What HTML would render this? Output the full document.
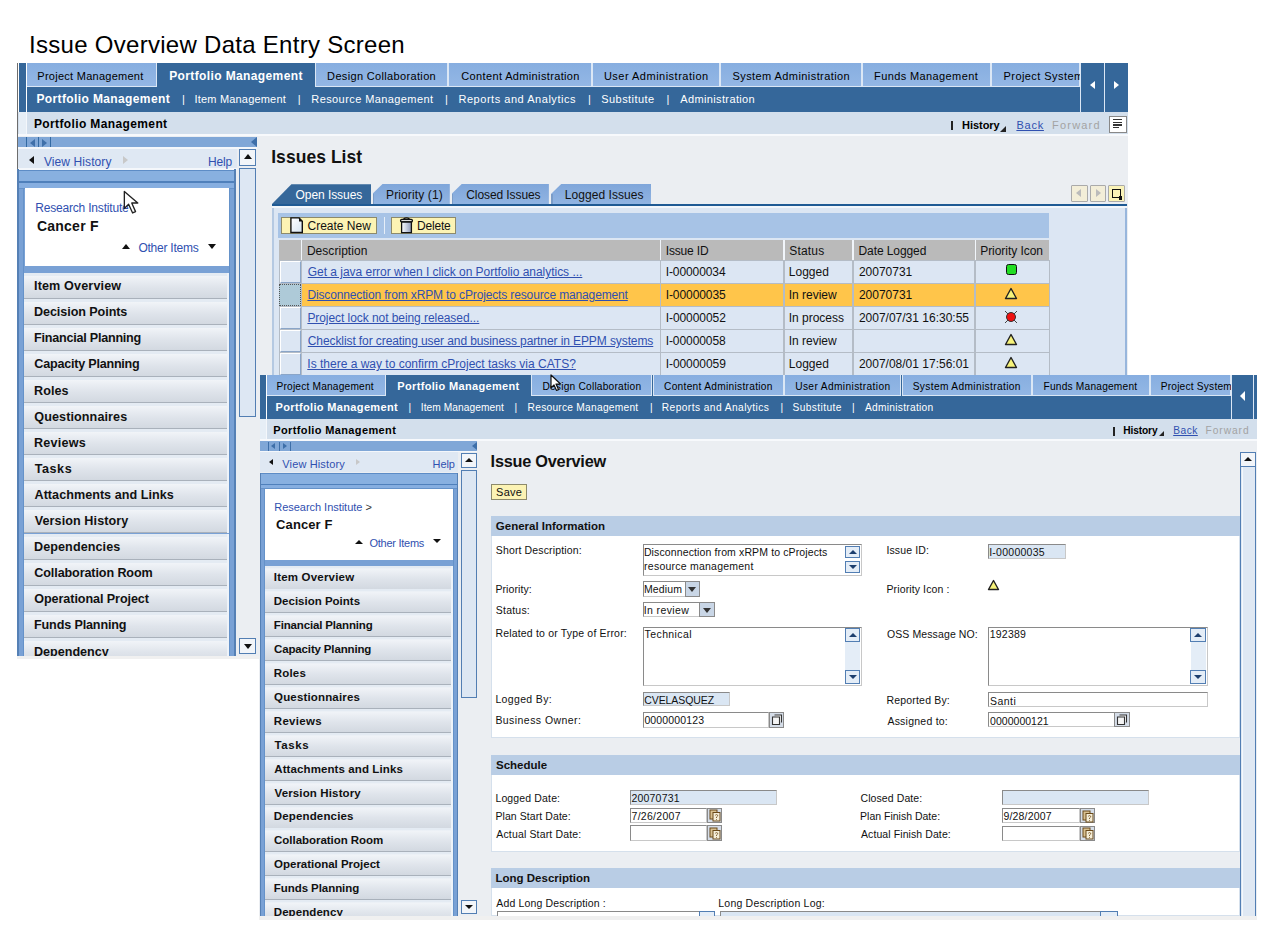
<!DOCTYPE html><html><head><meta charset="utf-8"><style>
html,body{margin:0;padding:0;background:#fff;width:1274px;height:932px;overflow:hidden;position:relative}
body div{position:absolute}
.t{white-space:nowrap;font-family:"Liberation Sans",sans-serif}
.u{text-decoration:underline}
</style></head><body>
<div class="t" style="left:29.10px;top:28.58px;font-size:24px;line-height:32px;color:#000;letter-spacing:0.281px;">Issue Overview Data Entry Screen</div>
<div style="left:17px;top:63px;width:1px;height:594px;background:#6d6d6d;"></div>
<div style="left:18px;top:63px;width:1110px;height:594px;background:#ebeef2;"></div>
<div style="left:18px;top:63px;width:9px;height:48.6px;background:#ffffff;"></div>
<div style="left:19px;top:63px;width:6.5px;height:48.6px;background:#35679a;"></div>
<div style="left:27px;top:63px;width:1053px;height:48.6px;background:#35679a;"></div>
<div style="left:27px;top:63px;width:130px;height:24px;background:#dbe7f5;"></div>
<div style="left:27px;top:63px;width:129px;height:23px;background:linear-gradient(#87aee0,#93b7e5);"></div>
<div style="left:315px;top:63px;width:133px;height:24px;background:#dbe7f5;"></div>
<div style="left:316px;top:63px;width:131px;height:23px;background:linear-gradient(#87aee0,#93b7e5);"></div>
<div style="left:448px;top:63px;width:144px;height:24px;background:#dbe7f5;"></div>
<div style="left:449px;top:63px;width:142px;height:23px;background:linear-gradient(#87aee0,#93b7e5);"></div>
<div style="left:592px;top:63px;width:128px;height:24px;background:#dbe7f5;"></div>
<div style="left:593px;top:63px;width:126px;height:23px;background:linear-gradient(#87aee0,#93b7e5);"></div>
<div style="left:720px;top:63px;width:142px;height:24px;background:#dbe7f5;"></div>
<div style="left:721px;top:63px;width:140px;height:23px;background:linear-gradient(#87aee0,#93b7e5);"></div>
<div style="left:862px;top:63px;width:129px;height:24px;background:#dbe7f5;"></div>
<div style="left:863px;top:63px;width:127px;height:23px;background:linear-gradient(#87aee0,#93b7e5);"></div>
<div style="left:991px;top:63px;width:89px;height:24px;background:#dbe7f5;"></div>
<div style="left:992px;top:63px;width:87px;height:23px;background:linear-gradient(#87aee0,#93b7e5);"></div>
<div style="left:27px;top:63px;width:1053px;height:24px;overflow:hidden">
<div class="t" style="left:10.30px;top:5.89px;font-size:11px;line-height:15px;color:#000;letter-spacing:0.265px;">Project Management</div>
<div class="t" style="left:142.20px;top:5.04px;font-size:12px;line-height:16px;color:#fff;font-weight:bold;letter-spacing:0.379px;">Portfolio Management</div>
<div class="t" style="left:300.10px;top:5.89px;font-size:11px;line-height:15px;color:#000;letter-spacing:0.342px;">Design Collaboration</div>
<div class="t" style="left:434.30px;top:5.89px;font-size:11px;line-height:15px;color:#000;letter-spacing:0.357px;">Content Administration</div>
<div class="t" style="left:576.90px;top:5.89px;font-size:11px;line-height:15px;color:#000;letter-spacing:0.494px;">User Administration</div>
<div class="t" style="left:705.50px;top:5.89px;font-size:11px;line-height:15px;color:#000;letter-spacing:0.420px;">System Administration</div>
<div class="t" style="left:847.10px;top:5.89px;font-size:11px;line-height:15px;color:#000;letter-spacing:0.387px;">Funds Management</div>
<div class="t" style="left:976.50px;top:5.89px;font-size:11px;line-height:15px;color:#000;letter-spacing:0.438px;">Project System</div>
</div>
<div style="left:1080px;top:63px;width:48px;height:48.6px;background:#35679a;"></div>
<div style="left:1080px;top:63px;width:1px;height:48.6px;background:#dbe7f5;"></div>
<div style="left:1104px;top:63px;width:1px;height:48.6px;background:#dbe7f5;"></div>
<div style="left:1089.8px;top:80.8px;width:0;height:0;border-right:5.4px solid #fff;border-top:4.7px solid transparent;border-bottom:4.7px solid transparent"></div>
<div style="left:1114.3px;top:80.8px;width:0;height:0;border-left:5.4px solid #fff;border-top:4.7px solid transparent;border-bottom:4.7px solid transparent"></div>
<div class="t" style="left:36.40px;top:91.14px;font-size:12px;line-height:16px;color:#fff;font-weight:bold;letter-spacing:0.384px;">Portfolio Management</div>
<div class="t" style="left:182.00px;top:91.99px;font-size:11px;line-height:15px;color:#fff;">|</div>
<div class="t" style="left:194.50px;top:91.99px;font-size:11px;line-height:15px;color:#fff;letter-spacing:0.186px;">Item Management</div>
<div class="t" style="left:297.80px;top:91.99px;font-size:11px;line-height:15px;color:#fff;">|</div>
<div class="t" style="left:311.30px;top:91.99px;font-size:11px;line-height:15px;color:#fff;letter-spacing:0.411px;">Resource Management</div>
<div class="t" style="left:445.00px;top:91.99px;font-size:11px;line-height:15px;color:#fff;">|</div>
<div class="t" style="left:458.50px;top:91.99px;font-size:11px;line-height:15px;color:#fff;letter-spacing:0.530px;">Reports and Analytics</div>
<div class="t" style="left:587.90px;top:91.99px;font-size:11px;line-height:15px;color:#fff;">|</div>
<div class="t" style="left:601.30px;top:91.99px;font-size:11px;line-height:15px;color:#fff;letter-spacing:0.433px;">Substitute</div>
<div class="t" style="left:666.40px;top:91.99px;font-size:11px;line-height:15px;color:#fff;">|</div>
<div class="t" style="left:680.30px;top:91.99px;font-size:11px;line-height:15px;color:#fff;letter-spacing:0.362px;">Administration</div>
<div style="left:18px;top:111.6px;width:1110px;height:22.2px;background:#d3dfec;"></div>
<div style="left:19px;top:111.6px;width:6.5px;height:22.2px;background:#e6eef6;"></div>
<div style="left:25.5px;top:111.6px;width:1.5px;height:22.2px;background:#f4f7fb;"></div>
<div class="t" style="left:33.90px;top:116.44px;font-size:12px;line-height:16px;color:#000;font-weight:bold;letter-spacing:0.379px;">Portfolio Management</div>
<div style="left:950.7px;top:120.7px;width:2.5px;height:9.7px;background:#222;"></div>
<div class="t" style="left:962.00px;top:117.59px;font-size:11px;line-height:15px;color:#000;font-weight:bold;letter-spacing:-0.033px;">History</div>
<div style="left:1000px;top:126px;width:0;height:0;border-left:6px solid transparent;border-bottom:6px solid #222"></div>
<div class="t u" style="left:1016.40px;top:117.59px;font-size:11px;line-height:15px;color:#3050b0;letter-spacing:0.767px;">Back</div>
<div class="t" style="left:1052.10px;top:117.59px;font-size:11px;line-height:15px;color:#a3a3a3;letter-spacing:1.183px;">Forward</div>
<div style="left:1109.3px;top:115.5px;width:17.4px;height:17.1px;background:#fff;border:1px solid #888;box-sizing:border-box;"></div>
<div style="left:1113px;top:119px;width:9px;height:1.4px;background:#333;"></div>
<div style="left:1113px;top:121.6px;width:9px;height:1.4px;background:#333;"></div>
<div style="left:1113px;top:124.2px;width:9px;height:1.4px;background:#333;"></div>
<div style="left:1113px;top:126.8px;width:6px;height:1.4px;background:#333;"></div>
<div style="left:18px;top:133.8px;width:1110px;height:2.5px;background:#f7f9fc;"></div>
<div style="left:18px;top:136.5px;width:239px;height:10.5px;background:#80a7d7;"></div>
<div style="left:25.6px;top:136.5px;width:1.6px;height:10.5px;background:#336aa3;"></div>
<div style="left:37.6px;top:136.5px;width:1.6px;height:10.5px;background:#336aa3;"></div>
<div style="left:49.6px;top:136.5px;width:1.6px;height:10.5px;background:#336aa3;"></div>
<div style="left:29.5px;top:138.5px;width:0;height:0;border-right:5px solid #3e6fa9;border-top:4px solid transparent;border-bottom:4px solid transparent"></div>
<div style="left:42px;top:138.5px;width:0;height:0;border-left:5px solid #3e6fa9;border-top:4px solid transparent;border-bottom:4px solid transparent"></div>
<div style="left:251px;top:137px;width:0;height:0;border-right:6px solid #3e6fa9;border-top:5px solid transparent;border-bottom:5px solid transparent"></div>
<div style="left:18px;top:146.6px;width:239px;height:2.4px;background:#f4f7fb;"></div>
<div style="left:18px;top:149px;width:219px;height:19px;background:#dfe8f3;"></div>
<div style="left:18px;top:168px;width:219px;height:1.7px;background:#f4f7fb;"></div>
<div style="left:28.5px;top:156px;width:0;height:0;border-right:5px solid #111;border-top:4px solid transparent;border-bottom:4px solid transparent"></div>
<div class="t" style="left:43.90px;top:153.74px;font-size:12px;line-height:16px;color:#3050b0;letter-spacing:0.100px;">View History</div>
<div style="left:123px;top:156px;width:0;height:0;border-left:5px solid #c8c8c8;border-top:4px solid transparent;border-bottom:4px solid transparent"></div>
<div class="t" style="left:208.00px;top:153.74px;font-size:12px;line-height:16px;color:#3050b0;letter-spacing:-0.167px;">Help</div>
<div style="left:18px;top:169.7px;width:217.7px;height:486.3px;background:#79a1d5;"></div>
<div style="left:18px;top:169.7px;width:217.7px;height:1.3px;background:#5d8cc6;"></div>
<div style="left:18px;top:171px;width:217.7px;height:10.3px;background:#88b0e0;"></div>
<div style="left:18px;top:181.3px;width:217.7px;height:1.7px;background:#4f80bb;"></div>
<div style="left:18px;top:183px;width:217.7px;height:4.5px;background:#86aee0;"></div>
<div style="left:18px;top:187.5px;width:217.7px;height:1px;background:#6592c9;"></div>
<div style="left:24.6px;top:188px;width:204.3px;height:77.6px;background:#fff;"></div>
<div class="t" style="left:35.20px;top:200.04px;font-size:12px;line-height:16px;color:#3050b0;letter-spacing:-0.188px;">Research Institute</div>
<div class="t" style="left:36.90px;top:217.25px;font-size:14px;line-height:19px;color:#111;font-weight:bold;letter-spacing:0.243px;">Cancer F</div>
<div style="left:122.2px;top:243.6px;width:0;height:0;border-bottom:5px solid #111;border-left:4.5px solid transparent;border-right:4.5px solid transparent"></div>
<div class="t" style="left:138.40px;top:239.54px;font-size:12px;line-height:16px;color:#3050b0;letter-spacing:-0.230px;">Other Items</div>
<div style="left:208px;top:243.6px;width:0;height:0;border-top:5px solid #111;border-left:4.5px solid transparent;border-right:4.5px solid transparent"></div>
<div style="left:17px;top:169px;width:1.5px;height:487px;background:#5580b5;"></div>
<div style="left:23px;top:188.5px;width:1px;height:467.5px;background:#6592c9;"></div>
<div style="left:229.3px;top:188.5px;width:1px;height:467.5px;background:#6592c9;"></div>
<div style="left:234.3px;top:169px;width:1.4px;height:487px;background:#5580b5;"></div>
<div style="left:24px;top:272.5px;width:205.3px;height:383.3px;overflow:hidden">
<div style="left:0;top:0.0px;width:205.3px;height:26.1px;background:linear-gradient(#e4ebf3 0,#e4ebf3 2.5px,#f1f4f8 3px,#dfe4eb 55%,#d3d9e1 24.7px,#a9b1bb 24.8px,#a9b1bb 26.1px);border-right:2px solid #eef3f9;box-sizing:border-box"></div>
<div class="t" style="left:10.00px;top:5.63px;font-size:12.6px;line-height:17px;color:#111;font-weight:bold;letter-spacing:0.142px;">Item Overview</div>
<div style="left:0;top:26.1px;width:205.3px;height:26.1px;background:linear-gradient(#e4ebf3 0,#e4ebf3 2.5px,#f1f4f8 3px,#dfe4eb 55%,#d3d9e1 24.7px,#a9b1bb 24.8px,#a9b1bb 26.1px);border-right:2px solid #eef3f9;box-sizing:border-box"></div>
<div class="t" style="left:10.00px;top:31.73px;font-size:12.6px;line-height:17px;color:#111;font-weight:bold;letter-spacing:-0.079px;">Decision Points</div>
<div style="left:0;top:52.2px;width:205.3px;height:26.1px;background:linear-gradient(#e4ebf3 0,#e4ebf3 2.5px,#f1f4f8 3px,#dfe4eb 55%,#d3d9e1 24.7px,#a9b1bb 24.8px,#a9b1bb 26.1px);border-right:2px solid #eef3f9;box-sizing:border-box"></div>
<div class="t" style="left:10.00px;top:57.83px;font-size:12.6px;line-height:17px;color:#111;font-weight:bold;letter-spacing:-0.235px;">Financial Planning</div>
<div style="left:0;top:78.3px;width:205.3px;height:26.1px;background:linear-gradient(#e4ebf3 0,#e4ebf3 2.5px,#f1f4f8 3px,#dfe4eb 55%,#d3d9e1 24.7px,#a9b1bb 24.8px,#a9b1bb 26.1px);border-right:2px solid #eef3f9;box-sizing:border-box"></div>
<div class="t" style="left:10.30px;top:83.93px;font-size:12.6px;line-height:17px;color:#111;font-weight:bold;letter-spacing:-0.231px;">Capacity Planning</div>
<div style="left:0;top:104.4px;width:205.3px;height:26.1px;background:linear-gradient(#e4ebf3 0,#e4ebf3 2.5px,#f1f4f8 3px,#dfe4eb 55%,#d3d9e1 24.7px,#a9b1bb 24.8px,#a9b1bb 26.1px);border-right:2px solid #eef3f9;box-sizing:border-box"></div>
<div class="t" style="left:10.00px;top:110.03px;font-size:12.6px;line-height:17px;color:#111;font-weight:bold;letter-spacing:0.075px;">Roles</div>
<div style="left:0;top:130.5px;width:205.3px;height:26.1px;background:linear-gradient(#e4ebf3 0,#e4ebf3 2.5px,#f1f4f8 3px,#dfe4eb 55%,#d3d9e1 24.7px,#a9b1bb 24.8px,#a9b1bb 26.1px);border-right:2px solid #eef3f9;box-sizing:border-box"></div>
<div class="t" style="left:10.30px;top:136.13px;font-size:12.6px;line-height:17px;color:#111;font-weight:bold;letter-spacing:0.092px;">Questionnaires</div>
<div style="left:0;top:156.6px;width:205.3px;height:26.1px;background:linear-gradient(#e4ebf3 0,#e4ebf3 2.5px,#f1f4f8 3px,#dfe4eb 55%,#d3d9e1 24.7px,#a9b1bb 24.8px,#a9b1bb 26.1px);border-right:2px solid #eef3f9;box-sizing:border-box"></div>
<div class="t" style="left:10.00px;top:162.23px;font-size:12.6px;line-height:17px;color:#111;font-weight:bold;letter-spacing:0.233px;">Reviews</div>
<div style="left:0;top:182.7px;width:205.3px;height:26.1px;background:linear-gradient(#e4ebf3 0,#e4ebf3 2.5px,#f1f4f8 3px,#dfe4eb 55%,#d3d9e1 24.7px,#a9b1bb 24.8px,#a9b1bb 26.1px);border-right:2px solid #eef3f9;box-sizing:border-box"></div>
<div class="t" style="left:10.70px;top:188.33px;font-size:12.6px;line-height:17px;color:#111;font-weight:bold;letter-spacing:0.550px;">Tasks</div>
<div style="left:0;top:208.8px;width:205.3px;height:26.1px;background:linear-gradient(#e4ebf3 0,#e4ebf3 2.5px,#f1f4f8 3px,#dfe4eb 55%,#d3d9e1 24.7px,#a9b1bb 24.8px,#a9b1bb 26.1px);border-right:2px solid #eef3f9;box-sizing:border-box"></div>
<div class="t" style="left:10.50px;top:214.43px;font-size:12.6px;line-height:17px;color:#111;font-weight:bold;letter-spacing:0.035px;">Attachments and Links</div>
<div style="left:0;top:234.9px;width:205.3px;height:26.1px;background:linear-gradient(#e4ebf3 0,#e4ebf3 2.5px,#f1f4f8 3px,#dfe4eb 55%,#d3d9e1 24.7px,#a9b1bb 24.8px,#a9b1bb 26.1px);border-right:2px solid #eef3f9;box-sizing:border-box"></div>
<div class="t" style="left:10.70px;top:240.53px;font-size:12.6px;line-height:17px;color:#111;font-weight:bold;letter-spacing:0.086px;">Version History</div>
<div style="left:0;top:261.0px;width:205.3px;height:26.1px;background:linear-gradient(#e4ebf3 0,#e4ebf3 2.5px,#f1f4f8 3px,#dfe4eb 55%,#d3d9e1 24.7px,#a9b1bb 24.8px,#a9b1bb 26.1px);border-right:2px solid #eef3f9;box-sizing:border-box"></div>
<div class="t" style="left:10.00px;top:266.63px;font-size:12.6px;line-height:17px;color:#111;font-weight:bold;letter-spacing:0.082px;">Dependencies</div>
<div style="left:0;top:287.1px;width:205.3px;height:26.1px;background:linear-gradient(#e4ebf3 0,#e4ebf3 2.5px,#f1f4f8 3px,#dfe4eb 55%,#d3d9e1 24.7px,#a9b1bb 24.8px,#a9b1bb 26.1px);border-right:2px solid #eef3f9;box-sizing:border-box"></div>
<div class="t" style="left:10.30px;top:292.73px;font-size:12.6px;line-height:17px;color:#111;font-weight:bold;letter-spacing:-0.112px;">Collaboration Room</div>
<div style="left:0;top:313.2px;width:205.3px;height:26.1px;background:linear-gradient(#e4ebf3 0,#e4ebf3 2.5px,#f1f4f8 3px,#dfe4eb 55%,#d3d9e1 24.7px,#a9b1bb 24.8px,#a9b1bb 26.1px);border-right:2px solid #eef3f9;box-sizing:border-box"></div>
<div class="t" style="left:10.30px;top:318.83px;font-size:12.6px;line-height:17px;color:#111;font-weight:bold;letter-spacing:-0.083px;">Operational Project</div>
<div style="left:0;top:339.3px;width:205.3px;height:26.1px;background:linear-gradient(#e4ebf3 0,#e4ebf3 2.5px,#f1f4f8 3px,#dfe4eb 55%,#d3d9e1 24.7px,#a9b1bb 24.8px,#a9b1bb 26.1px);border-right:2px solid #eef3f9;box-sizing:border-box"></div>
<div class="t" style="left:10.00px;top:344.93px;font-size:12.6px;line-height:17px;color:#111;font-weight:bold;letter-spacing:-0.146px;">Funds Planning</div>
<div style="left:0;top:365.4px;width:205.3px;height:26.1px;background:linear-gradient(#e4ebf3 0,#e4ebf3 2.5px,#f1f4f8 3px,#dfe4eb 55%,#d3d9e1 24.7px,#a9b1bb 24.8px,#a9b1bb 26.1px);border-right:2px solid #eef3f9;box-sizing:border-box"></div>
<div class="t" style="left:10.00px;top:371.03px;font-size:12.6px;line-height:17px;color:#111;font-weight:bold;letter-spacing:-0.011px;">Dependency</div>
</div>
<div style="left:237px;top:148.5px;width:25px;height:507.5px;background:#ebeef2;"></div>
<div style="left:239px;top:148.8px;width:17.4px;height:17.4px;background:#f2f5f9;border:1.3px solid #527eb3;box-sizing:border-box;"></div>
<div style="left:243.5px;top:154px;width:0;height:0;border-bottom:5px solid #111;border-left:4.5px solid transparent;border-right:4.5px solid transparent"></div>
<div style="left:239px;top:167.7px;width:17.4px;height:249.3px;background:#dde7f3;border:1.3px solid #527eb3;box-sizing:border-box;"></div>
<div style="left:239px;top:637.7px;width:17.4px;height:16.6px;background:#f2f5f9;border:1.3px solid #527eb3;box-sizing:border-box;"></div>
<div style="left:243.5px;top:643.5px;width:0;height:0;border-top:5px solid #111;border-left:4.5px solid transparent;border-right:4.5px solid transparent"></div>
<div style="left:17px;top:656px;width:245px;height:3px;background:#f0f0f0;"></div>
<div class="t" style="left:271.20px;top:146.24px;font-size:17.5px;line-height:23px;color:#111;font-weight:bold;letter-spacing:0.050px;">Issues List</div>
<div style="left:272px;top:184.2px;width:99.0px;height:19.8px;background:#35679a;clip-path:polygon(0 100%,19.4px 0,100% 0,100% 100%)"></div>
<div class="t" style="left:295.50px;top:187.24px;font-size:12px;line-height:16px;color:#fff;letter-spacing:-0.060px;">Open Issues</div>
<div style="left:372.5px;top:184px;width:77.3px;height:20px;background:linear-gradient(#7fa6da,#91b4e2);clip-path:polygon(0 100%,0 9.7px,10px 0,100% 0,100% 100%)"></div>
<div style="left:372.5px;top:193.7px;width:1.5px;height:10.3px;background:#7a9cc8;"></div>
<div class="t" style="left:386.00px;top:187.24px;font-size:12px;line-height:16px;color:#111;letter-spacing:0.127px;">Priority (1)</div>
<div style="left:451.7px;top:184px;width:97.2px;height:20px;background:linear-gradient(#7fa6da,#91b4e2);clip-path:polygon(0 100%,0 9.7px,10px 0,100% 0,100% 100%)"></div>
<div style="left:451.7px;top:193.7px;width:1.5px;height:10.3px;background:#7a9cc8;"></div>
<div class="t" style="left:466.30px;top:187.24px;font-size:12px;line-height:16px;color:#111;letter-spacing:-0.092px;">Closed Issues</div>
<div style="left:551.2px;top:184px;width:99.8px;height:20px;background:linear-gradient(#7fa6da,#91b4e2);clip-path:polygon(0 100%,0 9.7px,10px 0,100% 0,100% 100%)"></div>
<div style="left:551.2px;top:193.7px;width:1.5px;height:10.3px;background:#7a9cc8;"></div>
<div class="t" style="left:564.80px;top:187.24px;font-size:12px;line-height:16px;color:#111;letter-spacing:0.050px;">Logged Issues</div>
<div style="left:1071.3px;top:185.2px;width:16.6px;height:17.3px;background:#f3eed8;border:1px solid #aaa;box-sizing:border-box;border-radius:1px"></div>
<div style="left:1090px;top:185.2px;width:16.4px;height:17.3px;background:#f3eed8;border:1px solid #aaa;box-sizing:border-box;border-radius:1px"></div>
<div style="left:1108.4px;top:185.2px;width:17px;height:17.3px;background:#faf3b8;border:1px solid #aaa;box-sizing:border-box;border-radius:1px"></div>
<div style="left:1076px;top:189px;width:0;height:0;border-right:5px solid #bbb;border-top:4.5px solid transparent;border-bottom:4.5px solid transparent"></div>
<div style="left:1096px;top:189px;width:0;height:0;border-left:5px solid #bbb;border-top:4.5px solid transparent;border-bottom:4.5px solid transparent"></div>
<div style="left:1111.5px;top:188.5px;width:9.5px;height:9.5px;background:transparent;border:1.6px solid #111;box-sizing:border-box;"></div>
<div style="left:1119px;top:196px;width:3px;height:3.5px;background:#111;"></div>
<div style="left:272px;top:204px;width:854.5px;height:1.8px;background:#1f5a94;"></div>
<div style="left:272px;top:206px;width:855px;height:169px;background:#dce6f3;"></div>
<div style="left:272px;top:206px;width:1.5px;height:169px;background:#b5c9e2;"></div>
<div style="left:1125px;top:206px;width:2px;height:169px;background:#98b6dc;"></div>
<div style="left:272px;top:206px;width:855px;height:1.5px;background:#f2f6fb;"></div>
<div style="left:278px;top:213px;width:771px;height:24.6px;background:#a7c3e6;"></div>
<div style="left:281.4px;top:217px;width:95.4px;height:17px;background:#fcf3b4;border:1px solid #8d8a6b;box-sizing:border-box;"></div>
<div class="t" style="left:307.50px;top:218.14px;font-size:12px;line-height:16px;color:#111;">Create New</div>
<div style="left:391.3px;top:217px;width:65px;height:17px;background:#fcf3b4;border:1px solid #8d8a6b;box-sizing:border-box;"></div>
<div class="t" style="left:417.00px;top:218.14px;font-size:12px;line-height:16px;color:#111;letter-spacing:-0.200px;">Delete</div>
<div style="left:383.5px;top:217px;width:1.5px;height:17px;background:#e6eef8;"></div>
<svg style="position:absolute;left:289px;top:216px" width="16" height="19"><defs><linearGradient id="dg" x1="0" y1="0" x2="1" y2="1"><stop offset="0" stop-color="#ffffff"/><stop offset="1" stop-color="#d5e4f2"/></linearGradient></defs><path d="M1.9 1.9 H10 L13.3 5.2 V16.5 H1.9 Z" fill="url(#dg)" stroke="#111" stroke-width="1.4"/><path d="M10 1.4 L13.8 5.5 H10 Z" fill="#111"/></svg>
<svg style="position:absolute;left:399px;top:216px" width="15" height="19"><defs><linearGradient id="tg" x1="0" y1="0" x2="1" y2="0"><stop offset="0" stop-color="#ffffff"/><stop offset="0.5" stop-color="#c8cfe0"/><stop offset="1" stop-color="#8d98b8"/></linearGradient></defs><path d="M4.5 3 Q7.5 0.6 10.5 3" fill="none" stroke="#111" stroke-width="1.3"/><rect x="1.6" y="3.4" width="11.8" height="2.6" rx="1.2" fill="#ddd" stroke="#111" stroke-width="1.3"/><path d="M2.6 6 V16.6 H12.4 V6 Z" fill="url(#tg)" stroke="#111" stroke-width="1.3"/></svg>
<div style="left:279px;top:240px;width:770px;height:135px;background:#f1f5fa;"></div>
<div style="left:279px;top:240px;width:770px;height:20.4px;background:#bababa;"></div>
<div style="left:279px;top:260.4px;width:770.5px;height:114.6px;background:#b4bcc6;"></div>
<div style="left:300.5px;top:240px;width:1.5px;height:20.4px;background:#f1f5fa;"></div>
<div style="left:659.8px;top:240px;width:1.5px;height:20.4px;background:#f1f5fa;"></div>
<div style="left:783.1px;top:240px;width:1.5px;height:20.4px;background:#f1f5fa;"></div>
<div style="left:852.4px;top:240px;width:1.5px;height:20.4px;background:#f1f5fa;"></div>
<div style="left:974.5px;top:240px;width:1.5px;height:20.4px;background:#f1f5fa;"></div>
<div class="t" style="left:306.90px;top:243.04px;font-size:12px;line-height:16px;color:#111;letter-spacing:0.040px;">Description</div>
<div class="t" style="left:665.70px;top:243.04px;font-size:12px;line-height:16px;color:#111;letter-spacing:-0.143px;">Issue ID</div>
<div class="t" style="left:789.30px;top:243.04px;font-size:12px;line-height:16px;color:#111;letter-spacing:0.180px;">Status</div>
<div class="t" style="left:858.50px;top:243.04px;font-size:12px;line-height:16px;color:#111;letter-spacing:-0.090px;">Date Logged</div>
<div class="t" style="left:980.20px;top:243.04px;font-size:12px;line-height:16px;color:#111;letter-spacing:-0.050px;">Priority Icon</div>
<div style="left:302px;top:261px;width:357.8px;height:22px;background:#dce6f3;"></div>
<div style="left:661.3px;top:261px;width:121.8px;height:22px;background:#dce6f3;"></div>
<div style="left:784.6px;top:261px;width:67.8px;height:22px;background:#dce6f3;"></div>
<div style="left:853.9px;top:261px;width:120.6px;height:22px;background:#dce6f3;"></div>
<div style="left:976px;top:261px;width:72.5px;height:22px;background:#dce6f3;"></div>
<div style="left:302px;top:261px;width:357.8px;height:22px;background:#dce6f3;"></div>
<div style="left:279.5px;top:261px;width:21.5px;height:22px;background:#dce6f3;border:1.3px solid #fff;box-sizing:border-box;border-right-color:#8aa5c8;border-bottom-color:#8aa5c8"></div>
<div class="t u" style="left:307.80px;top:264.14px;font-size:12px;line-height:16px;color:#3050b0;letter-spacing:-0.029px;">Get a java error when I click on Portfolio analytics ...</div>
<div class="t" style="left:665.70px;top:264.14px;font-size:12px;line-height:16px;color:#111;letter-spacing:-0.089px;">I-00000034</div>
<div class="t" style="left:788.80px;top:264.14px;font-size:12px;line-height:16px;color:#111;">Logged</div>
<div class="t" style="left:858.90px;top:264.14px;font-size:12px;line-height:16px;color:#111;">20070731</div>
<div style="left:1005.5px;top:263.8px;width:11.5px;height:11.2px;background:#22dd22;border:1.5px solid #111;box-sizing:border-box;border-radius:2.5px"></div>
<div style="left:302px;top:284px;width:357.8px;height:22px;background:#ffc54a;"></div>
<div style="left:661.3px;top:284px;width:121.8px;height:22px;background:#ffc54a;"></div>
<div style="left:784.6px;top:284px;width:67.8px;height:22px;background:#ffc54a;"></div>
<div style="left:853.9px;top:284px;width:120.6px;height:22px;background:#ffc54a;"></div>
<div style="left:976px;top:284px;width:72.5px;height:22px;background:#ffc54a;"></div>
<div style="left:302px;top:284px;width:357.8px;height:22px;background:#ffc54a;"></div>
<div style="left:279px;top:284px;width:22px;height:22px;background:#aecad8;border:1px dotted #555;box-sizing:border-box;"></div>
<div class="t u" style="left:307.40px;top:287.14px;font-size:12px;line-height:16px;color:#3050b0;letter-spacing:-0.138px;">Disconnection from xRPM to cProjects resource management</div>
<div class="t" style="left:665.70px;top:287.14px;font-size:12px;line-height:16px;color:#111;letter-spacing:-0.078px;">I-00000035</div>
<div class="t" style="left:788.70px;top:287.14px;font-size:12px;line-height:16px;color:#111;">In review</div>
<div class="t" style="left:858.90px;top:287.14px;font-size:12px;line-height:16px;color:#111;">20070731</div>
<svg style="position:absolute;left:1004px;top:287px" width="14" height="13"><path d="M7 1.5 L12.5 11.5 H1.5 Z" fill="#f7f37a" stroke="#222" stroke-width="1.4" stroke-linejoin="round"/></svg>
<div style="left:302px;top:307px;width:357.8px;height:22px;background:#dce6f3;"></div>
<div style="left:661.3px;top:307px;width:121.8px;height:22px;background:#dce6f3;"></div>
<div style="left:784.6px;top:307px;width:67.8px;height:22px;background:#dce6f3;"></div>
<div style="left:853.9px;top:307px;width:120.6px;height:22px;background:#dce6f3;"></div>
<div style="left:976px;top:307px;width:72.5px;height:22px;background:#dce6f3;"></div>
<div style="left:302px;top:307px;width:357.8px;height:22px;background:#dce6f3;"></div>
<div style="left:279.5px;top:307px;width:21.5px;height:22px;background:#dce6f3;border:1.3px solid #fff;box-sizing:border-box;border-right-color:#8aa5c8;border-bottom-color:#8aa5c8"></div>
<div class="t u" style="left:307.40px;top:310.14px;font-size:12px;line-height:16px;color:#3050b0;letter-spacing:-0.064px;">Project lock not being released...</div>
<div class="t" style="left:665.70px;top:310.14px;font-size:12px;line-height:16px;color:#111;letter-spacing:-0.067px;">I-00000052</div>
<div class="t" style="left:788.70px;top:310.14px;font-size:12px;line-height:16px;color:#111;">In process</div>
<div class="t" style="left:858.90px;top:310.14px;font-size:12px;line-height:16px;color:#111;">2007/07/31 16:30:55</div>
<svg style="position:absolute;left:1004px;top:310px" width="14" height="14"><path d="M1 1 L13 13 M13 1 L1 13" stroke="#444" stroke-width="1"/><circle cx="7" cy="7" r="4.5" fill="#ee1111" stroke="#333" stroke-width="1"/></svg>
<div style="left:302px;top:330px;width:357.8px;height:22px;background:#dce6f3;"></div>
<div style="left:661.3px;top:330px;width:121.8px;height:22px;background:#dce6f3;"></div>
<div style="left:784.6px;top:330px;width:67.8px;height:22px;background:#dce6f3;"></div>
<div style="left:853.9px;top:330px;width:120.6px;height:22px;background:#dce6f3;"></div>
<div style="left:976px;top:330px;width:72.5px;height:22px;background:#dce6f3;"></div>
<div style="left:302px;top:330px;width:357.8px;height:22px;background:#dce6f3;"></div>
<div style="left:279.5px;top:330px;width:21.5px;height:22px;background:#dce6f3;border:1.3px solid #fff;box-sizing:border-box;border-right-color:#8aa5c8;border-bottom-color:#8aa5c8"></div>
<div class="t u" style="left:307.80px;top:333.14px;font-size:12px;line-height:16px;color:#3050b0;letter-spacing:-0.094px;">Checklist for creating user and business partner in EPPM systems</div>
<div class="t" style="left:665.70px;top:333.14px;font-size:12px;line-height:16px;color:#111;letter-spacing:-0.078px;">I-00000058</div>
<div class="t" style="left:788.70px;top:333.14px;font-size:12px;line-height:16px;color:#111;">In review</div>
<svg style="position:absolute;left:1004px;top:333px" width="14" height="13"><path d="M7 1.5 L12.5 11.5 H1.5 Z" fill="#f7f37a" stroke="#222" stroke-width="1.4" stroke-linejoin="round"/></svg>
<div style="left:302px;top:353px;width:357.8px;height:22px;background:#dce6f3;"></div>
<div style="left:661.3px;top:353px;width:121.8px;height:22px;background:#dce6f3;"></div>
<div style="left:784.6px;top:353px;width:67.8px;height:22px;background:#dce6f3;"></div>
<div style="left:853.9px;top:353px;width:120.6px;height:22px;background:#dce6f3;"></div>
<div style="left:976px;top:353px;width:72.5px;height:22px;background:#dce6f3;"></div>
<div style="left:302px;top:353px;width:357.8px;height:22px;background:#dce6f3;"></div>
<div style="left:279.5px;top:353px;width:21.5px;height:22px;background:#dce6f3;border:1.3px solid #fff;box-sizing:border-box;border-right-color:#8aa5c8;border-bottom-color:#8aa5c8"></div>
<div class="t u" style="left:307.30px;top:356.14px;font-size:12px;line-height:16px;color:#3050b0;">Is there a way to confirm cProject tasks via CATS?</div>
<div class="t" style="left:665.70px;top:356.14px;font-size:12px;line-height:16px;color:#111;letter-spacing:-0.067px;">I-00000059</div>
<div class="t" style="left:788.80px;top:356.14px;font-size:12px;line-height:16px;color:#111;">Logged</div>
<div class="t" style="left:858.90px;top:356.14px;font-size:12px;line-height:16px;color:#111;">2007/08/01 17:56:01</div>
<svg style="position:absolute;left:1004px;top:356px" width="14" height="13"><path d="M7 1.5 L12.5 11.5 H1.5 Z" fill="#f7f37a" stroke="#222" stroke-width="1.4" stroke-linejoin="round"/></svg>
<div style="left:259px;top:375px;width:997.7px;height:541px;background:#ebeef2;"></div>
<div style="left:260px;top:375px;width:7px;height:44px;background:#ffffff;"></div>
<div style="left:260.4px;top:375px;width:5.2px;height:44px;background:#35679a;"></div>
<div style="left:267px;top:375px;width:964.3px;height:44px;background:#35679a;"></div>
<div style="left:267px;top:375px;width:119.2px;height:21px;background:#dbe7f5;"></div>
<div style="left:267px;top:375px;width:118.2px;height:20px;background:linear-gradient(#87aee0,#93b7e5);"></div>
<div style="left:530.6px;top:375px;width:121.9px;height:21px;background:#dbe7f5;"></div>
<div style="left:531.6px;top:375px;width:119.9px;height:20px;background:linear-gradient(#87aee0,#93b7e5);"></div>
<div style="left:652.5px;top:375px;width:131.9px;height:21px;background:#dbe7f5;"></div>
<div style="left:653.5px;top:375px;width:129.9px;height:20px;background:linear-gradient(#87aee0,#93b7e5);"></div>
<div style="left:784.4px;top:375px;width:117.1px;height:21px;background:#dbe7f5;"></div>
<div style="left:785.4px;top:375px;width:115.1px;height:20px;background:linear-gradient(#87aee0,#93b7e5);"></div>
<div style="left:901.5px;top:375px;width:130.8px;height:21px;background:#dbe7f5;"></div>
<div style="left:902.5px;top:375px;width:128.8px;height:20px;background:linear-gradient(#87aee0,#93b7e5);"></div>
<div style="left:1032.3px;top:375px;width:117.3px;height:21px;background:#dbe7f5;"></div>
<div style="left:1033.3px;top:375px;width:115.3px;height:20px;background:linear-gradient(#87aee0,#93b7e5);"></div>
<div style="left:1149.6px;top:375px;width:81.7px;height:21px;background:#dbe7f5;"></div>
<div style="left:1150.6px;top:375px;width:79.7px;height:20px;background:linear-gradient(#87aee0,#93b7e5);"></div>
<div style="left:267px;top:375px;width:964.3px;height:21px;overflow:hidden">
<div class="t" style="left:9.50px;top:4.67px;font-size:10.2px;line-height:14px;color:#000;letter-spacing:0.182px;">Project Management</div>
<div class="t" style="left:130.30px;top:3.89px;font-size:11px;line-height:15px;color:#fff;font-weight:bold;letter-spacing:0.337px;">Portfolio Management</div>
<div class="t" style="left:275.40px;top:4.67px;font-size:10.2px;line-height:14px;color:#000;letter-spacing:0.216px;">Design Collaboration</div>
<div class="t" style="left:397.00px;top:4.67px;font-size:10.2px;line-height:14px;color:#000;letter-spacing:0.281px;">Content Administration</div>
<div class="t" style="left:528.20px;top:4.67px;font-size:10.2px;line-height:14px;color:#000;letter-spacing:0.367px;">User Administration</div>
<div class="t" style="left:645.70px;top:4.67px;font-size:10.2px;line-height:14px;color:#000;letter-spacing:0.350px;">System Administration</div>
<div class="t" style="left:776.50px;top:4.67px;font-size:10.2px;line-height:14px;color:#000;letter-spacing:0.200px;">Funds Management</div>
<div class="t" style="left:893.70px;top:4.67px;font-size:10.2px;line-height:14px;color:#000;letter-spacing:0.2px">Project System</div>
</div>
<div style="left:1231.3px;top:375px;width:25.4px;height:44px;background:#35679a;"></div>
<div style="left:1231.3px;top:375px;width:1px;height:44px;background:#dbe7f5;"></div>
<div style="left:1253px;top:375px;width:1px;height:44px;background:#dbe7f5;"></div>
<div style="left:1240px;top:391px;width:0;height:0;border-right:5.5px solid #fff;border-top:5.5px solid transparent;border-bottom:5.5px solid transparent"></div>
<div class="t" style="left:275.60px;top:400.09px;font-size:11px;line-height:15px;color:#fff;font-weight:bold;letter-spacing:0.347px;">Portfolio Management</div>
<div class="t" style="left:408.60px;top:400.87px;font-size:10.2px;line-height:14px;color:#fff;">|</div>
<div class="t" style="left:420.80px;top:400.87px;font-size:10.2px;line-height:14px;color:#fff;letter-spacing:0.071px;">Item Management</div>
<div class="t" style="left:514.60px;top:400.87px;font-size:10.2px;line-height:14px;color:#fff;">|</div>
<div class="t" style="left:527.60px;top:400.87px;font-size:10.2px;line-height:14px;color:#fff;letter-spacing:0.261px;">Resource Management</div>
<div class="t" style="left:650.10px;top:400.87px;font-size:10.2px;line-height:14px;color:#fff;">|</div>
<div class="t" style="left:661.80px;top:400.87px;font-size:10.2px;line-height:14px;color:#fff;letter-spacing:0.430px;">Reports and Analytics</div>
<div class="t" style="left:780.40px;top:400.87px;font-size:10.2px;line-height:14px;color:#fff;">|</div>
<div class="t" style="left:792.50px;top:400.87px;font-size:10.2px;line-height:14px;color:#fff;letter-spacing:0.400px;">Substitute</div>
<div class="t" style="left:852.00px;top:400.87px;font-size:10.2px;line-height:14px;color:#fff;">|</div>
<div class="t" style="left:865.00px;top:400.87px;font-size:10.2px;line-height:14px;color:#fff;letter-spacing:0.277px;">Administration</div>
<div style="left:260px;top:419px;width:996.7px;height:20.4px;background:#d3dfec;"></div>
<div style="left:260.4px;top:419px;width:5.2px;height:20.4px;background:#e6eef6;"></div>
<div style="left:265.6px;top:419px;width:1.4px;height:20.4px;background:#f4f7fb;"></div>
<div class="t" style="left:273.30px;top:422.89px;font-size:11px;line-height:15px;color:#000;font-weight:bold;letter-spacing:0.368px;">Portfolio Management</div>
<div style="left:1112.8px;top:426.8px;width:2.2px;height:9px;background:#222;"></div>
<div class="t" style="left:1123.30px;top:424.27px;font-size:10.2px;line-height:14px;color:#000;font-weight:bold;letter-spacing:-0.133px;">History</div>
<div style="left:1158.5px;top:431px;width:0;height:0;border-left:5px solid transparent;border-bottom:5px solid #222"></div>
<div class="t u" style="left:1173.20px;top:424.27px;font-size:10.2px;line-height:14px;color:#3050b0;letter-spacing:0.500px;">Back</div>
<div class="t" style="left:1205.60px;top:424.27px;font-size:10.2px;line-height:14px;color:#a3a3a3;letter-spacing:0.933px;">Forward</div>
<div style="left:260px;top:439.4px;width:996.7px;height:2px;background:#f7f9fc;"></div>
<div style="left:260px;top:441.4px;width:217.3px;height:9.4px;background:#80a7d7;"></div>
<div style="left:267.5px;top:441.6px;width:1.2px;height:9.2px;background:#3e6fa9;"></div>
<div style="left:278.5px;top:441.6px;width:1.2px;height:9.2px;background:#3e6fa9;"></div>
<div style="left:289.5px;top:441.6px;width:1.2px;height:9.2px;background:#3e6fa9;"></div>
<div style="left:271px;top:442.6px;width:0;height:0;border-right:4.5px solid #3e6fa9;border-top:3.6px solid transparent;border-bottom:3.6px solid transparent"></div>
<div style="left:282.5px;top:442.6px;width:0;height:0;border-left:4.5px solid #3e6fa9;border-top:3.6px solid transparent;border-bottom:3.6px solid transparent"></div>
<div style="left:471.5px;top:441.6px;width:0;height:0;border-right:5.5px solid #3e6fa9;border-top:4.6px solid transparent;border-bottom:4.6px solid transparent"></div>
<div style="left:260px;top:450.8px;width:217.3px;height:1.4px;background:#f4f7fb;"></div>
<div style="left:260px;top:452.2px;width:199px;height:20.3px;background:#dfe8f3;"></div>
<div style="left:269.2px;top:459px;width:0;height:0;border-right:4.5px solid #111;border-top:3.8px solid transparent;border-bottom:3.8px solid transparent"></div>
<div class="t" style="left:282.30px;top:457.29px;font-size:11px;line-height:15px;color:#3050b0;letter-spacing:0.136px;">View History</div>
<div style="left:356px;top:459px;width:0;height:0;border-left:4.5px solid #c8c8c8;border-top:3.8px solid transparent;border-bottom:3.8px solid transparent"></div>
<div class="t" style="left:432.60px;top:457.29px;font-size:11px;line-height:15px;color:#3050b0;letter-spacing:-0.133px;">Help</div>
<div style="left:260px;top:472.5px;width:198px;height:443.5px;background:#79a1d5;"></div>
<div style="left:260px;top:472.5px;width:198px;height:1.5px;background:#5d8cc6;"></div>
<div style="left:260px;top:474px;width:198px;height:9.5px;background:#88b0e0;"></div>
<div style="left:260px;top:483.5px;width:198px;height:1.8px;background:#4f80bb;"></div>
<div style="left:260px;top:485.3px;width:198px;height:2.9px;background:#86aee0;"></div>
<div style="left:260px;top:488.2px;width:198px;height:1px;background:#6592c9;"></div>
<div style="left:264.9px;top:489px;width:187.7px;height:71px;background:#fff;"></div>
<div class="t" style="left:274.30px;top:499.99px;font-size:11px;line-height:15px;color:#3050b0;letter-spacing:-0.035px;">Research Institute</div>
<div class="t" style="left:365.50px;top:499.99px;font-size:11px;line-height:15px;color:#333;">&gt;</div>
<div class="t" style="left:276.10px;top:515.80px;font-size:13px;line-height:17px;color:#111;font-weight:bold;letter-spacing:0.100px;">Cancer F</div>
<div style="left:354.6px;top:539.5px;width:0;height:0;border-bottom:4.5px solid #111;border-left:4px solid transparent;border-right:4px solid transparent"></div>
<div class="t" style="left:369.50px;top:536.09px;font-size:11px;line-height:15px;color:#3050b0;letter-spacing:-0.260px;">Other Items</div>
<div style="left:433px;top:539px;width:0;height:0;border-top:4.5px solid #111;border-left:4px solid transparent;border-right:4px solid transparent"></div>
<div style="left:260px;top:472.5px;width:1.2px;height:443.5px;background:#5580b5;"></div>
<div style="left:264px;top:489.2px;width:0.9px;height:426.8px;background:#6592c9;"></div>
<div style="left:452.6px;top:489.2px;width:0.9px;height:426.8px;background:#6592c9;"></div>
<div style="left:456.8px;top:472.5px;width:1.2px;height:443.5px;background:#5580b5;"></div>
<div style="left:264.9px;top:565.5px;width:187.7px;height:350.5px;overflow:hidden">
<div style="left:0;top:0.0px;width:187.7px;height:23.95px;background:linear-gradient(#e4ebf3 0,#e4ebf3 2.2px,#f1f4f8 2.7px,#dfe4eb 55%,#d3d9e1 22.6px,#a9b1bb 22.8px,#a9b1bb 23.95px);border-right:2px solid #eef3f9;box-sizing:border-box"></div>
<div class="t" style="left:8.90px;top:4.92px;font-size:11.5px;line-height:15px;color:#111;font-weight:bold;letter-spacing:0.197px;">Item Overview</div>
<div style="left:0;top:23.9px;width:187.7px;height:23.95px;background:linear-gradient(#e4ebf3 0,#e4ebf3 2.2px,#f1f4f8 2.7px,#dfe4eb 55%,#d3d9e1 22.6px,#a9b1bb 22.8px,#a9b1bb 23.95px);border-right:2px solid #eef3f9;box-sizing:border-box"></div>
<div class="t" style="left:8.90px;top:28.82px;font-size:11.5px;line-height:15px;color:#111;font-weight:bold;">Decision Points</div>
<div style="left:0;top:47.8px;width:187.7px;height:23.95px;background:linear-gradient(#e4ebf3 0,#e4ebf3 2.2px,#f1f4f8 2.7px,#dfe4eb 55%,#d3d9e1 22.6px,#a9b1bb 22.8px,#a9b1bb 23.95px);border-right:2px solid #eef3f9;box-sizing:border-box"></div>
<div class="t" style="left:8.90px;top:52.72px;font-size:11.5px;line-height:15px;color:#111;font-weight:bold;letter-spacing:-0.156px;">Financial Planning</div>
<div style="left:0;top:71.7px;width:187.7px;height:23.95px;background:linear-gradient(#e4ebf3 0,#e4ebf3 2.2px,#f1f4f8 2.7px,#dfe4eb 55%,#d3d9e1 22.6px,#a9b1bb 22.8px,#a9b1bb 23.95px);border-right:2px solid #eef3f9;box-sizing:border-box"></div>
<div class="t" style="left:9.20px;top:76.62px;font-size:11.5px;line-height:15px;color:#111;font-weight:bold;letter-spacing:-0.152px;">Capacity Planning</div>
<div style="left:0;top:95.6px;width:187.7px;height:23.95px;background:linear-gradient(#e4ebf3 0,#e4ebf3 2.2px,#f1f4f8 2.7px,#dfe4eb 55%,#d3d9e1 22.6px,#a9b1bb 22.8px,#a9b1bb 23.95px);border-right:2px solid #eef3f9;box-sizing:border-box"></div>
<div class="t" style="left:8.90px;top:100.52px;font-size:11.5px;line-height:15px;color:#111;font-weight:bold;letter-spacing:0.176px;">Roles</div>
<div style="left:0;top:119.5px;width:187.7px;height:23.95px;background:linear-gradient(#e4ebf3 0,#e4ebf3 2.2px,#f1f4f8 2.7px,#dfe4eb 55%,#d3d9e1 22.6px,#a9b1bb 22.8px,#a9b1bb 23.95px);border-right:2px solid #eef3f9;box-sizing:border-box"></div>
<div class="t" style="left:9.20px;top:124.42px;font-size:11.5px;line-height:15px;color:#111;font-weight:bold;letter-spacing:0.156px;">Questionnaires</div>
<div style="left:0;top:143.4px;width:187.7px;height:23.95px;background:linear-gradient(#e4ebf3 0,#e4ebf3 2.2px,#f1f4f8 2.7px,#dfe4eb 55%,#d3d9e1 22.6px,#a9b1bb 22.8px,#a9b1bb 23.95px);border-right:2px solid #eef3f9;box-sizing:border-box"></div>
<div class="t" style="left:8.90px;top:148.32px;font-size:11.5px;line-height:15px;color:#111;font-weight:bold;letter-spacing:0.310px;">Reviews</div>
<div style="left:0;top:167.3px;width:187.7px;height:23.95px;background:linear-gradient(#e4ebf3 0,#e4ebf3 2.2px,#f1f4f8 2.7px,#dfe4eb 55%,#d3d9e1 22.6px,#a9b1bb 22.8px,#a9b1bb 23.95px);border-right:2px solid #eef3f9;box-sizing:border-box"></div>
<div class="t" style="left:9.60px;top:172.22px;font-size:11.5px;line-height:15px;color:#111;font-weight:bold;letter-spacing:0.590px;">Tasks</div>
<div style="left:0;top:191.2px;width:187.7px;height:23.95px;background:linear-gradient(#e4ebf3 0,#e4ebf3 2.2px,#f1f4f8 2.7px,#dfe4eb 55%,#d3d9e1 22.6px,#a9b1bb 22.8px,#a9b1bb 23.95px);border-right:2px solid #eef3f9;box-sizing:border-box"></div>
<div class="t" style="left:9.40px;top:196.12px;font-size:11.5px;line-height:15px;color:#111;font-weight:bold;letter-spacing:0.100px;">Attachments and Links</div>
<div style="left:0;top:215.1px;width:187.7px;height:23.95px;background:linear-gradient(#e4ebf3 0,#e4ebf3 2.2px,#f1f4f8 2.7px,#dfe4eb 55%,#d3d9e1 22.6px,#a9b1bb 22.8px,#a9b1bb 23.95px);border-right:2px solid #eef3f9;box-sizing:border-box"></div>
<div class="t" style="left:9.60px;top:220.02px;font-size:11.5px;line-height:15px;color:#111;font-weight:bold;letter-spacing:0.137px;">Version History</div>
<div style="left:0;top:239.0px;width:187.7px;height:23.95px;background:linear-gradient(#e4ebf3 0,#e4ebf3 2.2px,#f1f4f8 2.7px,#dfe4eb 55%,#d3d9e1 22.6px,#a9b1bb 22.8px,#a9b1bb 23.95px);border-right:2px solid #eef3f9;box-sizing:border-box"></div>
<div class="t" style="left:8.90px;top:243.92px;font-size:11.5px;line-height:15px;color:#111;font-weight:bold;letter-spacing:0.152px;">Dependencies</div>
<div style="left:0;top:262.9px;width:187.7px;height:23.95px;background:linear-gradient(#e4ebf3 0,#e4ebf3 2.2px,#f1f4f8 2.7px,#dfe4eb 55%,#d3d9e1 22.6px,#a9b1bb 22.8px,#a9b1bb 23.95px);border-right:2px solid #eef3f9;box-sizing:border-box"></div>
<div class="t" style="left:9.20px;top:267.82px;font-size:11.5px;line-height:15px;color:#111;font-weight:bold;letter-spacing:-0.038px;">Collaboration Room</div>
<div style="left:0;top:286.8px;width:187.7px;height:23.95px;background:linear-gradient(#e4ebf3 0,#e4ebf3 2.2px,#f1f4f8 2.7px,#dfe4eb 55%,#d3d9e1 22.6px,#a9b1bb 22.8px,#a9b1bb 23.95px);border-right:2px solid #eef3f9;box-sizing:border-box"></div>
<div class="t" style="left:9.20px;top:291.72px;font-size:11.5px;line-height:15px;color:#111;font-weight:bold;letter-spacing:-0.017px;">Operational Project</div>
<div style="left:0;top:310.7px;width:187.7px;height:23.95px;background:linear-gradient(#e4ebf3 0,#e4ebf3 2.2px,#f1f4f8 2.7px,#dfe4eb 55%,#d3d9e1 22.6px,#a9b1bb 22.8px,#a9b1bb 23.95px);border-right:2px solid #eef3f9;box-sizing:border-box"></div>
<div class="t" style="left:8.90px;top:315.62px;font-size:11.5px;line-height:15px;color:#111;font-weight:bold;letter-spacing:-0.061px;">Funds Planning</div>
<div style="left:0;top:334.6px;width:187.7px;height:23.95px;background:linear-gradient(#e4ebf3 0,#e4ebf3 2.2px,#f1f4f8 2.7px,#dfe4eb 55%,#d3d9e1 22.6px,#a9b1bb 22.8px,#a9b1bb 23.95px);border-right:2px solid #eef3f9;box-sizing:border-box"></div>
<div class="t" style="left:8.90px;top:339.52px;font-size:11.5px;line-height:15px;color:#111;font-weight:bold;letter-spacing:0.071px;">Dependency</div>
</div>
<div style="left:458px;top:452.2px;width:19.3px;height:463.8px;background:#ebeef2;"></div>
<div style="left:461.1px;top:452.6px;width:16.2px;height:15.4px;background:#f2f5f9;border:1.3px solid #527eb3;box-sizing:border-box;"></div>
<div style="left:465.2px;top:457.5px;width:0;height:0;border-bottom:4.5px solid #111;border-left:4px solid transparent;border-right:4px solid transparent"></div>
<div style="left:461.1px;top:469.8px;width:16.2px;height:227.9px;background:#dde7f3;border:1.3px solid #527eb3;box-sizing:border-box;"></div>
<div style="left:461.1px;top:899.5px;width:16.2px;height:14.8px;background:#f2f5f9;border:1.3px solid #527eb3;box-sizing:border-box;"></div>
<div style="left:465.2px;top:904.5px;width:0;height:0;border-top:4.5px solid #111;border-left:4px solid transparent;border-right:4px solid transparent"></div>
<div class="t" style="left:490.60px;top:450.05px;font-size:16.3px;line-height:22px;color:#111;font-weight:bold;letter-spacing:-0.231px;">Issue Overview</div>
<div style="left:491.3px;top:484.2px;width:35.6px;height:15.8px;background:#fcf3b4;border:1px solid #8d8a6b;box-sizing:border-box;"></div>
<div class="t" style="left:496.00px;top:484.69px;font-size:11px;line-height:15px;color:#111;letter-spacing:0.300px;">Save</div>
<div style="left:1240.3px;top:451.7px;width:15.7px;height:464.3px;background:#dfe8f3;"></div>
<div style="left:1240.3px;top:451.7px;width:1.2px;height:464.3px;background:#527eb3;"></div>
<div style="left:1241.5px;top:451.7px;width:1.5px;height:464.3px;background:#f4f8fc;"></div>
<div style="left:1254.5px;top:451.7px;width:1.3px;height:464.3px;background:#527eb3;"></div>
<div style="left:1240.3px;top:451.7px;width:15.7px;height:15px;background:#f2f5f9;border:1.3px solid #527eb3;box-sizing:border-box;"></div>
<div style="left:1244.2px;top:457px;width:0;height:0;border-bottom:4.5px solid #111;border-left:4px solid transparent;border-right:4px solid transparent"></div>
<div style="left:259px;top:916px;width:998px;height:3.5px;background:#f0f0f0;"></div>
<div style="left:491.3px;top:516px;width:749px;height:19.5px;background:#b9cde5;"></div>
<div class="t" style="left:495.80px;top:518.92px;font-size:11.5px;line-height:15px;color:#111;font-weight:bold;">General Information</div>
<div style="left:491.3px;top:535.5px;width:749px;height:202.5px;background:#fff;"></div>
<div style="left:491.3px;top:535.5px;width:1px;height:202.5px;background:#d5e0ec;"></div>
<div style="left:1239.3px;top:535.5px;width:1px;height:202.5px;background:#d5e0ec;"></div>
<div style="left:491.3px;top:737px;width:749px;height:1px;background:#d5e0ec;"></div>
<div style="left:491.3px;top:755px;width:749px;height:19.5px;background:#b9cde5;"></div>
<div class="t" style="left:496.00px;top:758.12px;font-size:11.5px;line-height:15px;color:#111;font-weight:bold;">Schedule</div>
<div style="left:491.3px;top:774.5px;width:749px;height:77.9px;background:#fff;"></div>
<div style="left:491.3px;top:774.5px;width:1px;height:77.9px;background:#d5e0ec;"></div>
<div style="left:1239.3px;top:774.5px;width:1px;height:77.9px;background:#d5e0ec;"></div>
<div style="left:491.3px;top:851.4px;width:749px;height:1px;background:#d5e0ec;"></div>
<div style="left:491.3px;top:868.1px;width:749px;height:20.1px;background:#b9cde5;"></div>
<div class="t" style="left:495.50px;top:871.12px;font-size:11.5px;line-height:15px;color:#111;font-weight:bold;">Long Description</div>
<div style="left:491.3px;top:888.2px;width:749px;height:27.8px;background:#fff;"></div>
<div style="left:491.3px;top:888.2px;width:1px;height:27.8px;background:#d5e0ec;"></div>
<div style="left:1239.3px;top:888.2px;width:1px;height:27.8px;background:#d5e0ec;"></div>
<div style="left:491.3px;top:915px;width:749px;height:1px;background:#d5e0ec;"></div>
<div class="t" style="left:495.80px;top:543.16px;font-size:10.5px;line-height:14px;color:#111;letter-spacing:0.135px;">Short Description:</div>
<div style="left:642.6px;top:544px;width:219.8px;height:31.5px;background:#fff;border:1px solid #8a8a8a;box-sizing:border-box;border-right-color:#c8c8c8;border-bottom-color:#c8c8c8"></div>
<div class="t" style="left:643.90px;top:545.06px;font-size:10.5px;line-height:14px;color:#111;letter-spacing:0.123px;">Disconnection from xRPM to cProjects</div>
<div class="t" style="left:644.10px;top:558.56px;font-size:10.5px;line-height:14px;color:#111;letter-spacing:0.233px;">resource management</div>
<div style="left:844.8px;top:545.7px;width:15.7px;height:12.6px;background:#e4edf7;border:1.3px solid #527eb3;box-sizing:border-box;"></div>
<div style="left:848.6px;top:549.5px;width:0;height:0;border-bottom:4.5px solid #1d3f6e;border-left:4px solid transparent;border-right:4px solid transparent"></div>
<div style="left:844.8px;top:560.5px;width:15.7px;height:12.8px;background:#e4edf7;border:1.3px solid #527eb3;box-sizing:border-box;"></div>
<div style="left:848.6px;top:564.9px;width:0;height:0;border-top:4.5px solid #1d3f6e;border-left:4px solid transparent;border-right:4px solid transparent"></div>
<div class="t" style="left:495.40px;top:581.56px;font-size:10.5px;line-height:14px;color:#111;letter-spacing:0.088px;">Priority:</div>
<div style="left:642.6px;top:581.2px;width:57.2px;height:15.4px;background:#fff;border:1px solid #8a8a8a;box-sizing:border-box;border-right-color:#c8c8c8;border-bottom-color:#c8c8c8"></div>
<div class="t" style="left:643.90px;top:581.86px;font-size:10.5px;line-height:14px;color:#111;letter-spacing:0.140px;">Medium</div>
<div style="left:684.7px;top:581.2px;width:15.1px;height:15.4px;background:#c9d6e6;border:1px solid #8a8a8a;box-sizing:border-box;"></div>
<div style="left:687.8px;top:586.9px;width:0;height:0;border-top:5px solid #333;border-left:4.5px solid transparent;border-right:4.5px solid transparent"></div>
<div class="t" style="left:495.80px;top:602.76px;font-size:10.5px;line-height:14px;color:#111;letter-spacing:0.217px;">Status:</div>
<div style="left:642.6px;top:602.2px;width:72.2px;height:15.1px;background:#fff;border:1px solid #8a8a8a;box-sizing:border-box;border-right-color:#c8c8c8;border-bottom-color:#c8c8c8"></div>
<div class="t" style="left:643.80px;top:602.96px;font-size:10.5px;line-height:14px;color:#111;letter-spacing:0.375px;">In review</div>
<div style="left:699.2px;top:602.2px;width:15.6px;height:15.1px;background:#c9d6e6;border:1px solid #8a8a8a;box-sizing:border-box;"></div>
<div style="left:702.5px;top:607.8px;width:0;height:0;border-top:5px solid #333;border-left:4.5px solid transparent;border-right:4.5px solid transparent"></div>
<div class="t" style="left:495.40px;top:625.66px;font-size:10.5px;line-height:14px;color:#111;letter-spacing:0.181px;">Related to or Type of Error:</div>
<div style="left:642.6px;top:626.7px;width:219.8px;height:59.3px;background:#fff;border:1px solid #8a8a8a;box-sizing:border-box;border-right-color:#c8c8c8;border-bottom-color:#c8c8c8"></div>
<div class="t" style="left:644.60px;top:626.76px;font-size:10.5px;line-height:14px;color:#111;letter-spacing:0.400px;">Technical</div>
<div style="left:845.3px;top:642.4px;width:15.2px;height:27.3px;background:#e4edf7;"></div>
<div style="left:844.8px;top:628.3px;width:15.7px;height:14.1px;background:#e4edf7;border:1.3px solid #527eb3;box-sizing:border-box;"></div>
<div style="left:848.6px;top:632.8px;width:0;height:0;border-bottom:4.5px solid #1d3f6e;border-left:4px solid transparent;border-right:4px solid transparent"></div>
<div style="left:844.8px;top:669.7px;width:15.7px;height:14.1px;background:#e4edf7;border:1.3px solid #527eb3;box-sizing:border-box;"></div>
<div style="left:848.6px;top:674.8px;width:0;height:0;border-top:4.5px solid #1d3f6e;border-left:4px solid transparent;border-right:4px solid transparent"></div>
<div class="t" style="left:495.40px;top:692.36px;font-size:10.5px;line-height:14px;color:#111;letter-spacing:0.356px;">Logged By:</div>
<div style="left:642.6px;top:691.7px;width:87.6px;height:14.8px;background:#dae6f3;border:1px solid #8a8a8a;box-sizing:border-box;border-right-color:#c8c8c8;border-bottom-color:#c8c8c8"></div>
<div class="t" style="left:644.30px;top:692.56px;font-size:10.5px;line-height:14px;color:#111;letter-spacing:-0.089px;">CVELASQUEZ</div>
<div class="t" style="left:495.40px;top:712.76px;font-size:10.5px;line-height:14px;color:#111;letter-spacing:0.443px;">Business Owner:</div>
<div style="left:642.6px;top:712px;width:126.9px;height:15.8px;background:#fff;border:1px solid #8a8a8a;box-sizing:border-box;border-right-color:#c8c8c8;border-bottom-color:#c8c8c8"></div>
<div class="t" style="left:644.40px;top:713.16px;font-size:10.5px;line-height:14px;color:#111;letter-spacing:0.133px;">0000000123</div>
<div style="left:768.5px;top:712px;width:15.5px;height:15.8px;background:#d5dde8;border:1px solid #8a8a8a;box-sizing:border-box;"></div>
<svg style="position:absolute;left:770.5px;top:714.0px" width="12" height="12"><path d="M3.5 1 H10.5 V8.5 M1.5 3 H8.5 V10.5 H1.5 Z" fill="#f4f4f4" stroke="#333" stroke-width="1.1"/></svg>
<div class="t" style="left:886.40px;top:543.36px;font-size:10.5px;line-height:14px;color:#111;letter-spacing:0.125px;">Issue ID:</div>
<div style="left:988px;top:544.3px;width:77.7px;height:15.2px;background:#dae6f3;border:1px solid #8a8a8a;box-sizing:border-box;border-right-color:#c8c8c8;border-bottom-color:#c8c8c8"></div>
<div class="t" style="left:989.20px;top:544.86px;font-size:10.5px;line-height:14px;color:#111;letter-spacing:0.256px;">I-00000035</div>
<div class="t" style="left:886.50px;top:581.96px;font-size:10.5px;line-height:14px;color:#111;letter-spacing:0.114px;">Priority Icon :</div>
<svg style="position:absolute;left:987px;top:579px" width="13" height="12"><path d="M6.5 1.5 L11.5 10.5 H1.5 Z" fill="#f7f37a" stroke="#222" stroke-width="1.4" stroke-linejoin="round"/></svg>
<div class="t" style="left:886.90px;top:626.66px;font-size:10.5px;line-height:14px;color:#111;letter-spacing:0.114px;">OSS Message NO:</div>
<div style="left:988px;top:626.7px;width:219.8px;height:59.3px;background:#fff;border:1px solid #8a8a8a;box-sizing:border-box;border-right-color:#c8c8c8;border-bottom-color:#c8c8c8"></div>
<div class="t" style="left:989.70px;top:627.36px;font-size:10.5px;line-height:14px;color:#111;letter-spacing:0.240px;">192389</div>
<div style="left:1190.8px;top:642.4px;width:15.4px;height:27.3px;background:#e4edf7;"></div>
<div style="left:1190.3px;top:628.3px;width:15.9px;height:14.1px;background:#e4edf7;border:1.3px solid #527eb3;box-sizing:border-box;"></div>
<div style="left:1194.2px;top:632.8px;width:0;height:0;border-bottom:4.5px solid #1d3f6e;border-left:4px solid transparent;border-right:4px solid transparent"></div>
<div style="left:1190.3px;top:669.7px;width:15.9px;height:14.1px;background:#e4edf7;border:1.3px solid #527eb3;box-sizing:border-box;"></div>
<div style="left:1194.2px;top:674.8px;width:0;height:0;border-top:4.5px solid #1d3f6e;border-left:4px solid transparent;border-right:4px solid transparent"></div>
<div class="t" style="left:886.50px;top:693.36px;font-size:10.5px;line-height:14px;color:#111;letter-spacing:0.182px;">Reported By:</div>
<div style="left:988px;top:691.7px;width:219.5px;height:15.3px;background:#fff;border:1px solid #8a8a8a;box-sizing:border-box;border-right-color:#c8c8c8;border-bottom-color:#c8c8c8"></div>
<div class="t" style="left:990.00px;top:693.56px;font-size:10.5px;line-height:14px;color:#111;letter-spacing:0.450px;">Santi</div>
<div class="t" style="left:887.40px;top:713.56px;font-size:10.5px;line-height:14px;color:#111;letter-spacing:0.236px;">Assigned to:</div>
<div style="left:988px;top:712.4px;width:126.8px;height:14.9px;background:#fff;border:1px solid #8a8a8a;box-sizing:border-box;border-right-color:#c8c8c8;border-bottom-color:#c8c8c8"></div>
<div class="t" style="left:990.10px;top:713.56px;font-size:10.5px;line-height:14px;color:#111;letter-spacing:0.022px;">0000000121</div>
<div style="left:1113.8px;top:712.4px;width:16.2px;height:14.9px;background:#d5dde8;border:1px solid #8a8a8a;box-sizing:border-box;"></div>
<svg style="position:absolute;left:1115.8px;top:714.4px" width="12" height="12"><path d="M3.5 1 H10.5 V8.5 M1.5 3 H8.5 V10.5 H1.5 Z" fill="#f4f4f4" stroke="#333" stroke-width="1.1"/></svg>
<div class="t" style="left:495.40px;top:790.66px;font-size:10.5px;line-height:14px;color:#111;letter-spacing:0.145px;">Logged Date:</div>
<div style="left:629.8px;top:789.6px;width:146.9px;height:15.7px;background:#dae6f3;border:1px solid #8a8a8a;box-sizing:border-box;border-right-color:#c8c8c8;border-bottom-color:#c8c8c8"></div>
<div class="t" style="left:631.50px;top:790.86px;font-size:10.5px;line-height:14px;color:#111;letter-spacing:0.186px;">20070731</div>
<div class="t" style="left:495.40px;top:808.66px;font-size:10.5px;line-height:14px;color:#111;letter-spacing:0.080px;">Plan Start Date:</div>
<div style="left:629.8px;top:807.5px;width:76.9px;height:15.7px;background:#fff;border:1px solid #8a8a8a;box-sizing:border-box;border-right-color:#c8c8c8;border-bottom-color:#c8c8c8"></div>
<div class="t" style="left:631.50px;top:808.86px;font-size:10.5px;line-height:14px;color:#111;letter-spacing:0.287px;">7/26/2007</div>
<div style="left:706.7px;top:807.5px;width:15.1px;height:15.7px;background:#d5dde8;border:1px solid #8a8a8a;box-sizing:border-box;"></div>
<svg style="position:absolute;left:708.7px;top:809.0px" width="12" height="13"><rect x="1" y="1" width="7" height="9" fill="#d8c090" stroke="#6a4a1a" stroke-width="1"/><rect x="4" y="3.5" width="7" height="8.5" fill="#f5eed8" stroke="#6a4a1a" stroke-width="1"/><path d="M6.2 6.3 Q7.5 4.8 8.8 6.3 Q8.8 7.3 7.5 8 V9 M7.5 10 V10.8" fill="none" stroke="#7a5a2a" stroke-width="0.9"/></svg>
<div class="t" style="left:496.30px;top:826.76px;font-size:10.5px;line-height:14px;color:#111;letter-spacing:0.153px;">Actual Start Date:</div>
<div style="left:629.8px;top:825.4px;width:76.9px;height:15.7px;background:#fff;border:1px solid #8a8a8a;box-sizing:border-box;border-right-color:#c8c8c8;border-bottom-color:#c8c8c8"></div>
<div style="left:706.7px;top:825.4px;width:15.1px;height:15.7px;background:#d5dde8;border:1px solid #8a8a8a;box-sizing:border-box;"></div>
<svg style="position:absolute;left:708.7px;top:826.9px" width="12" height="13"><rect x="1" y="1" width="7" height="9" fill="#d8c090" stroke="#6a4a1a" stroke-width="1"/><rect x="4" y="3.5" width="7" height="8.5" fill="#f5eed8" stroke="#6a4a1a" stroke-width="1"/><path d="M6.2 6.3 Q7.5 4.8 8.8 6.3 Q8.8 7.3 7.5 8 V9 M7.5 10 V10.8" fill="none" stroke="#7a5a2a" stroke-width="0.9"/></svg>
<div class="t" style="left:860.50px;top:791.06px;font-size:10.5px;line-height:14px;color:#111;letter-spacing:0.091px;">Closed Date:</div>
<div style="left:1002px;top:790px;width:146.8px;height:14.9px;background:#dae6f3;border:1px solid #8a8a8a;box-sizing:border-box;border-right-color:#c8c8c8;border-bottom-color:#c8c8c8"></div>
<div class="t" style="left:860.10px;top:808.66px;font-size:10.5px;line-height:14px;color:#111;">Plan Finish Date:</div>
<div style="left:1002px;top:808.2px;width:77.6px;height:15px;background:#fff;border:1px solid #8a8a8a;box-sizing:border-box;border-right-color:#c8c8c8;border-bottom-color:#c8c8c8"></div>
<div class="t" style="left:1003.50px;top:808.86px;font-size:10.5px;line-height:14px;color:#111;letter-spacing:0.162px;">9/28/2007</div>
<div style="left:1079.6px;top:808.2px;width:15px;height:15px;background:#d5dde8;border:1px solid #8a8a8a;box-sizing:border-box;"></div>
<svg style="position:absolute;left:1081.6px;top:809.7px" width="12" height="13"><rect x="1" y="1" width="7" height="9" fill="#d8c090" stroke="#6a4a1a" stroke-width="1"/><rect x="4" y="3.5" width="7" height="8.5" fill="#f5eed8" stroke="#6a4a1a" stroke-width="1"/><path d="M6.2 6.3 Q7.5 4.8 8.8 6.3 Q8.8 7.3 7.5 8 V9 M7.5 10 V10.8" fill="none" stroke="#7a5a2a" stroke-width="0.9"/></svg>
<div class="t" style="left:861.00px;top:826.66px;font-size:10.5px;line-height:14px;color:#111;letter-spacing:0.089px;">Actual Finish Date:</div>
<div style="left:1002px;top:825.9px;width:77.6px;height:14.9px;background:#fff;border:1px solid #8a8a8a;box-sizing:border-box;border-right-color:#c8c8c8;border-bottom-color:#c8c8c8"></div>
<div style="left:1079.6px;top:825.9px;width:15px;height:14.9px;background:#d5dde8;border:1px solid #8a8a8a;box-sizing:border-box;"></div>
<svg style="position:absolute;left:1081.6px;top:827.4px" width="12" height="13"><rect x="1" y="1" width="7" height="9" fill="#d8c090" stroke="#6a4a1a" stroke-width="1"/><rect x="4" y="3.5" width="7" height="8.5" fill="#f5eed8" stroke="#6a4a1a" stroke-width="1"/><path d="M6.2 6.3 Q7.5 4.8 8.8 6.3 Q8.8 7.3 7.5 8 V9 M7.5 10 V10.8" fill="none" stroke="#7a5a2a" stroke-width="0.9"/></svg>
<div class="t" style="left:496.30px;top:895.86px;font-size:10.5px;line-height:14px;color:#111;letter-spacing:0.152px;">Add Long Description :</div>
<div class="t" style="left:718.30px;top:895.86px;font-size:10.5px;line-height:14px;color:#111;letter-spacing:0.210px;">Long Description Log:</div>
<div style="left:497.3px;top:910.5px;width:218.2px;height:14.5px;background:#fff;border:1px solid #8a8a8a;box-sizing:border-box;border-right-color:#c8c8c8;border-bottom-color:#c8c8c8"></div>
<div style="left:698.8px;top:911px;width:16.7px;height:14px;background:#e4edf7;border:1.3px solid #527eb3;box-sizing:border-box;"></div>
<div style="left:703.1px;top:915.5px;width:0;height:0;border-bottom:4.5px solid #1d3f6e;border-left:4px solid transparent;border-right:4px solid transparent"></div>
<div style="left:720.2px;top:910.5px;width:397.7px;height:14.5px;background:#dae6f3;border:1px solid #8a8a8a;box-sizing:border-box;border-right-color:#c8c8c8;border-bottom-color:#c8c8c8"></div>
<div style="left:1100.2px;top:911px;width:17.7px;height:14px;background:#e4edf7;border:1.3px solid #527eb3;box-sizing:border-box;"></div>
<div style="left:1105.1px;top:915.5px;width:0;height:0;border-bottom:4.5px solid #1d3f6e;border-left:4px solid transparent;border-right:4px solid transparent"></div>
<div style="left:259px;top:916px;width:998px;height:16px;background:#fff;"></div>
<div style="left:259px;top:916px;width:998px;height:3.5px;background:#f0f0f0;"></div>
<svg style="position:absolute;left:123px;top:190px" width="22" height="26"><path d="M1.2 1.3 V16.5 L5 12.8 L8.6 20.5 L11.2 19.3 L7.8 11.6 L13.2 11.6 Z" fill="#fff" stroke="#222" stroke-width="1.2" stroke-linejoin="round" transform="scale(1.12)"/></svg>
<svg style="position:absolute;left:549.5px;top:374px" width="16" height="20"><path d="M1 1 V14 L4 11 L6.5 16.5 L8.5 15.6 L6 10 L10.5 10 Z" fill="#fff" stroke="#111" stroke-width="1.2" stroke-linejoin="round"/></svg>
</body></html>
